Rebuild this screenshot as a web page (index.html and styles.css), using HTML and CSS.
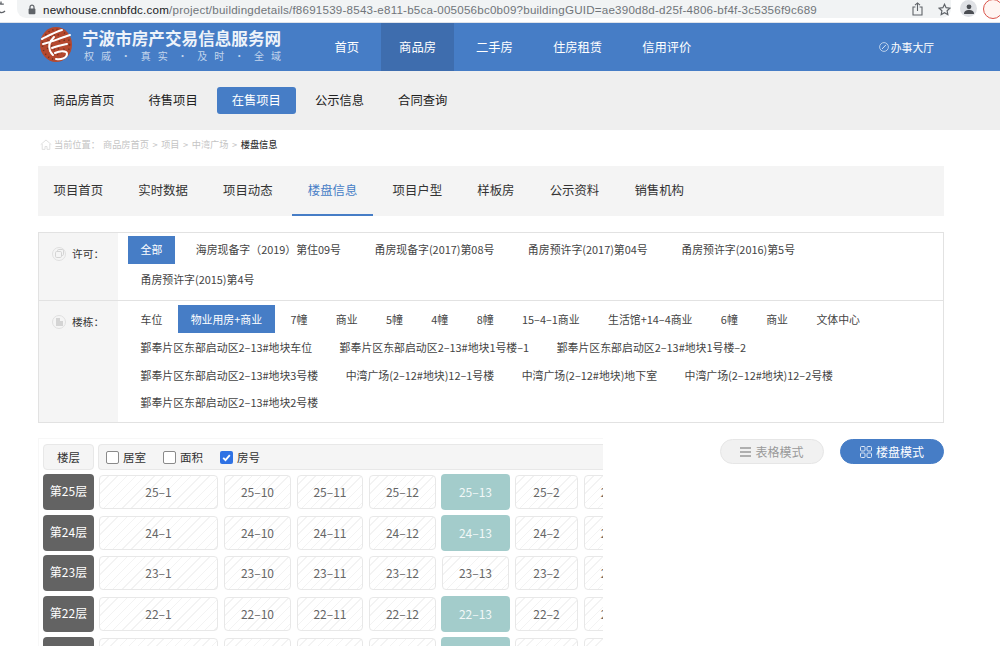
FILE: index.html
```html
<!DOCTYPE html>
<html lang="zh-CN">
<head>
<meta charset="utf-8">
<title>楼盘信息</title>
<link rel="stylesheet" href="styles.css">
</head>
<body>
<div class="chrome">
  <svg class="reload" width="6" height="14" viewBox="0 0 6 14"><path d="M1.5 2.6A4.6 4.6 0 0 0 -3 7a4.6 4.6 0 0 0 8 3M1 .5v2.6h2.8" fill="none" stroke="#5f6368" stroke-width="1.3"/></svg>
  <div class="urlbar">
    <svg class="lock" width="8" height="11" viewBox="0 0 8 11"><path d="M2 5V3.2a2 2 0 0 1 4 0V5" fill="none" stroke="#5f6368" stroke-width="1.2"/><rect x="0.6" y="4.6" width="6.8" height="5.6" rx="1" fill="#5f6368"/></svg>
    <span class="url"><b class="host">newhouse.cnnbfdc.com</b>/project/buildingdetails/f8691539-8543-e811-b5ca-005056bc0b09?buildingGUID=ae390d8d-d25f-4806-bf4f-3c5356f9c689</span>
    <svg class="url-icon share" width="11" height="14" viewBox="0 0 11 14"><path d="M3.4 5H1v8h9V5H7.6M5.5 9V1M3 3.2 5.5.9 8 3.2" fill="none" stroke="#5f6368" stroke-width="1.1"/></svg>
    <svg class="url-icon star" width="13" height="13" viewBox="0 0 13 13"><path d="m6.5 1.3 1.6 3.4 3.7.5-2.7 2.6.7 3.7-3.3-1.8-3.3 1.8.7-3.7L1.2 5.2l3.7-.5z" fill="none" stroke="#5f6368" stroke-width="1.2"/></svg>
  </div>
  <div class="avatar"><svg width="10" height="10" viewBox="0 0 10 10"><circle cx="5" cy="2.8" r="2.4" fill="#4a4d52"/><path d="M0 10c0-3 2-4 5-4s5 1 5 4z" fill="#4a4d52"/></svg></div>
  <div class="profile"></div>
</div>

<header class="topbar">
  <div class="brand">
    <svg class="logo" width="32" height="35" viewBox="0 0 32 35">
      <ellipse cx="16" cy="17.500" rx="16" ry="17.500" fill="#b5482e"/>
      <g fill="none" stroke="#5b2a1f" stroke-width="1.600" stroke-dasharray="1.200 3" opacity=".75">
        <ellipse cx="16" cy="17.500" rx="13.500" ry="15"/>
        <ellipse cx="16" cy="17.500" rx="9" ry="10"/>
        <ellipse cx="16" cy="17.500" rx="4.500" ry="5"/>
      </g>
      <path d="M2 12C8 9 15 5 22 3M3 17C12 15 20 11 30 8M14 10C10 14 8 19 10 24c1 2 2 3 3 4M12 21c5-2 10-3 15-4M15 26c4-2 12-3 12 1 0 4-6 6-11 5" fill="none" stroke="#fff" stroke-width="2" stroke-linecap="round"/>
    </svg>
    <div class="brand-text">
      <div class="brand-title">宁波市房产交易信息服务网</div>
      <div class="brand-sub"><span class="pair"><i>权</i><i>威</i></span><span>·</span><span class="pair"><i>真</i><i>实</i></span><span>·</span><span class="pair"><i>及</i><i>时</i></span><span>·</span><span class="pair"><i>全</i><i>域</i></span></div>
    </div>
  </div>
  <nav class="mainnav">
    <a class="mainnav-item">首页</a>
    <a class="mainnav-item is-active">商品房</a>
    <a class="mainnav-item">二手房</a>
    <a class="mainnav-item">住房租赁</a>
    <a class="mainnav-item">信用评价</a>
  </nav>
  <a class="hall">
    <svg width="10" height="10" viewBox="0 0 10 10"><circle cx="5" cy="5" r="4.4" fill="none" stroke="#d5e2f3" stroke-width=".8"/><path d="m3 7 4-4.2" stroke="#d5e2f3" stroke-width="1"/></svg>
    办事大厅
  </a>
</header>

<nav class="subnav">
  <a class="subnav-item">商品房首页</a>
  <a class="subnav-item">待售项目</a>
  <a class="subnav-item is-active">在售项目</a>
  <a class="subnav-item">公示信息</a>
  <a class="subnav-item">合同查询</a>
</nav>

<main class="content">
  <div class="crumbs">
    <svg width="12" height="11" viewBox="0 0 12 11"><path d="M.7 5.6 6 1l5.300 4.600M2.200 5v5.400h2.800V7.500h2v2.900h2.800V5" fill="none" stroke="#dcdcdc" stroke-width=".9"/></svg>
    <span class="crumb-label">当前位置：</span>
    <span class="crumb-trail">商品房首页 &gt; 项目 &gt; 中湾广场 &gt; <strong>楼盘信息</strong></span>
  </div>

  <nav class="tabs">
    <a class="tab">项目首页</a>
    <a class="tab">实时数据</a>
    <a class="tab">项目动态</a>
    <a class="tab is-active">楼盘信息</a>
    <a class="tab">项目户型</a>
    <a class="tab">样板房</a>
    <a class="tab">公示资料</a>
    <a class="tab">销售机构</a>
  </nav>

  <section class="filters">
    <div class="filter filter-license">
      <div class="filter-label">
        <span class="filter-icon"><svg width="9" height="9" viewBox="0 0 9 9"><rect x="2.500" y=".5" width="6" height="6" rx="1.200" fill="none" stroke="#d4d4d4"/><rect x=".5" y="2.500" width="6" height="6" rx="1.200" fill="#f5f5f5" stroke="#d4d4d4"/></svg></span>
        许可：
      </div>
      <div class="filter-options">
        <a class="opt is-active">全部</a>
        <a class="opt">海房现备字（2019）第住09号</a>
        <a class="opt">甬房现备字(2017)第08号</a>
        <a class="opt">甬房预许字(2017)第04号</a>
        <a class="opt">甬房预许字(2016)第5号</a>
        <a class="opt">甬房预许字(2015)第4号</a>
      </div>
    </div>
    <div class="filter filter-building">
      <div class="filter-label">
        <span class="filter-icon"><svg width="9" height="9" viewBox="0 0 9 9"><path d="M1 9V1h4v8zM5 9V4h3v5z" fill="#d4d4d4"/></svg></span>
        楼栋：
      </div>
      <div class="filter-options">
        <a class="opt">车位</a>
        <a class="opt is-active">物业用房+商业</a>
        <a class="opt">7幢</a>
        <a class="opt">商业</a>
        <a class="opt">5幢</a>
        <a class="opt">4幢</a>
        <a class="opt">8幢</a>
        <a class="opt">15–4–1商业</a>
        <a class="opt">生活馆+14–4商业</a>
        <a class="opt">6幢</a>
        <a class="opt">商业</a>
        <a class="opt">文体中心</a>
        <a class="opt">鄞奉片区东部启动区2–13#地块车位</a>
        <a class="opt">鄞奉片区东部启动区2–13#地块1号楼–1</a>
        <a class="opt">鄞奉片区东部启动区2–13#地块1号楼–2</a>
        <a class="opt">鄞奉片区东部启动区2–13#地块3号楼</a>
        <a class="opt">中湾广场(2–12#地块)12–1号楼</a>
        <a class="opt">中湾广场(2–12#地块)地下室</a>
        <a class="opt">中湾广场(2–12#地块)12–2号楼</a>
        <a class="opt">鄞奉片区东部启动区2–13#地块2号楼</a>
      </div>
    </div>
  </section>

  <section class="board">
    <div class="plan">
      <div class="plan-head">
        <div class="plan-floor-title">楼层</div>
        <div class="plan-options">
          <label class="check"><span class="box"></span>居室</label>
          <label class="check"><span class="box"></span>面积</label>
          <label class="check"><span class="box is-checked"><svg width="13" height="13" viewBox="0 0 13 13"><path d="m3.200 6.800 2.300 2.400 4.300-5" fill="none" stroke="#fff" stroke-width="1.800"/></svg></span>房号</label>
        </div>
      </div>
      <div class="floor">
        <div class="floor-name">第25层</div>
        <div class="cell">25–1</div><div class="cell">25–10</div><div class="cell">25–11</div><div class="cell">25–12</div><div class="cell is-sold">25–13</div><div class="cell">25–2</div><div class="cell">25–3</div>
      </div>
      <div class="floor">
        <div class="floor-name">第24层</div>
        <div class="cell">24–1</div><div class="cell">24–10</div><div class="cell">24–11</div><div class="cell">24–12</div><div class="cell is-sold">24–13</div><div class="cell">24–2</div><div class="cell">24–3</div>
      </div>
      <div class="floor">
        <div class="floor-name">第23层</div>
        <div class="cell">23–1</div><div class="cell">23–10</div><div class="cell">23–11</div><div class="cell">23–12</div><div class="cell">23–13</div><div class="cell">23–2</div><div class="cell">23–3</div>
      </div>
      <div class="floor">
        <div class="floor-name">第22层</div>
        <div class="cell">22–1</div><div class="cell">22–10</div><div class="cell">22–11</div><div class="cell">22–12</div><div class="cell is-sold">22–13</div><div class="cell">22–2</div><div class="cell">22–3</div>
      </div>
      <div class="floor">
        <div class="floor-name">第21层</div>
        <div class="cell">21–1</div><div class="cell">21–10</div><div class="cell">21–11</div><div class="cell">21–12</div><div class="cell is-sold">21–13</div><div class="cell">21–2</div><div class="cell">21–3</div>
      </div>
    </div>
    <div class="modes">
      <a class="mode">
        <svg width="11" height="10" viewBox="0 0 11 10"><path d="M0 1h11M0 5h11M0 9h11" stroke="#999" stroke-width="1.300"/></svg>
        表格模式
      </a>
      <a class="mode is-active">
        <svg width="12" height="12" viewBox="0 0 12 12"><g fill="none" stroke="#dbe6f5" stroke-width="1"><rect x=".5" y=".5" width="4.500" height="4.500" rx="1"/><rect x="7" y=".5" width="4.500" height="4.500" rx="1"/><rect x=".5" y="7" width="4.500" height="4.500" rx="1"/><rect x="7" y="7" width="4.500" height="4.500" rx="1"/></g></svg>
        楼盘模式
      </a>
    </div>
  </section>
</main>
</body>
</html>
```
FILE: styles.css
```css
* { box-sizing: border-box; }
html, body { margin: 0; height: 646px; overflow: hidden; background: #fff; }
body { font-family: "Noto Sans CJK SC", "Liberation Sans", sans-serif; color: #333; }
a { color: inherit; text-decoration: none; }

.chrome { height: 23px; display: flex; align-items: flex-start; border-bottom: 1px solid #dfe3ea; background: #fff; }
.reload { flex: none; margin: 1px 11px 0 0; }
.urlbar { width: 941px; height: 18px; background: #f1f3f4; border-radius: 0 0 9px 9px; display: flex; align-items: center; padding: 0 0 0 11px; }
.lock { flex: none; margin-right: 7px; }
.url { font: 11.6px "Liberation Sans", sans-serif; color: #70757a; white-space: nowrap; width: 806px; flex: none; overflow: hidden; letter-spacing: .215px; }
.host { font-weight: 400; color: #202124; }
.url-icon { flex: none; }
.share { margin: 0 0 0 63px; }
.star { margin-left: 15px; }
.avatar { flex: none; width: 17px; height: 17px; border-radius: 50%; background: #dfe1e5; margin: 0 0 0 9px; display: flex; align-items: center; justify-content: center; }
.profile { flex: none; width: 20px; height: 20px; border-radius: 50%; border: 1px solid #d9534a; background: #fff5f2; margin: -1px 0 0 6px; }

.topbar { height: 48px; background: #467dc6; display: flex; color: #fff; padding-left: 40px; }
.brand { width: 276.500px; flex: none; display: flex; align-items: center; }
.logo { flex: none; margin: -5px 10px 0 0; }
.brand-text { margin-top: -5px; }
.brand-title { font-size: 16.600px; line-height: 20px; font-weight: 700; color: #eef3fa; white-space: nowrap; }
.brand-sub { display: flex; justify-content: space-between; width: 197px; margin: 1px 0 0 2px; font-size: 10px; line-height: 13px; color: #c3d5ec; white-space: nowrap; }
.pair { display: flex; gap: 7px; }
.pair i { font-style: normal; }
.mainnav { display: flex; gap: 4px; }
.mainnav-item { padding: 0 18px; font-size: 12.300px; line-height: 48px; }
.mainnav-item.is-active { background: #3e6dae; }
.hall { margin-left: auto; margin-right: 66px; display: flex; align-items: center; gap: 2px; font-size: 10.800px; }

.subnav { height: 59px; background: #efefef; padding-left: 38px; display: flex; align-items: center; gap: 4px; }
.subnav-item { padding: 0 15px; height: 27px; line-height: 26px; font-size: 12.300px; color: #222; border-radius: 3px; }
.subnav-item.is-active { background: #467dc6; color: #fff; }

.content { width: 906px; margin-left: 38px; }
.crumbs { height: 36px; padding: 0 0 8px 2px; display: flex; align-items: center; font-size: 9.200px; color: #c4c4c4; }
.crumbs svg { flex: none; margin-right: 2px; }
.crumb-label { width: 49px; }
.crumb-trail { word-spacing: 1.500px; }
.crumb-trail strong { font-weight: 500; color: #333; }

.tabs { height: 50px; background: #f4f4f4; display: flex; gap: 4px; }
.tab { padding: 0 15.600px; line-height: 48px; font-size: 12.400px; color: #333; height: 50px; }
.tab.is-active { color: #467dc6; border-bottom: 2px solid #467dc6; }

.filters { margin-top: 16px; border: 1px solid #e2e2e2; }
.filter { display: flex; }
.filter + .filter { border-top: 1px solid #e2e2e2; }
.filter-label { width: 79px; flex: none; background: #f5f5f5; display: flex; align-items: flex-start; font-size: 10.700px; color: #333; padding: 12.500px 0 0 13px; line-height: 16px; }
.filter-icon { width: 14px; height: 14px; border-radius: 50%; border: 1px solid #e0e0e0; margin: 1px 6px 0 0; display: flex; align-items: center; justify-content: center; }
.filter-options { flex: 1; display: flex; flex-wrap: wrap; align-content: flex-start; font-size: 10.900px; padding-left: 10px; }
.filter-license { height: 67px; }
.filter-license .filter-options { padding-top: 3px; column-gap: 8.500px; row-gap: 2px; }
.filter-building { height: 122px; }
.filter-building .filter-options { padding-top: 4px; column-gap: 2.500px; }
.opt { padding: 0 12.500px; height: 28px; line-height: 27px; color: #444; white-space: nowrap; }
.filter-building .opt { height: 27.700px; line-height: 29px; }
.filter-building .opt:nth-child(-n+12) { margin-right: .9px; }
.filter-building .opt.is-active { height: 28px; }
.opt.is-active { background: #467dc6; color: #fff; }

.board { display: flex; justify-content: space-between; margin-top: 15px; }
.plan { width: 565px; height: 300px; overflow: hidden; border-top: 1px solid #f7f7f7; border-left: 1px solid #f7f7f7; padding: 5px 0 0 4px; flex: none; }
.plan-head { display: flex; gap: 4px; height: 26px; margin-bottom: 4px; }
.plan-floor-title { width: 51px; flex: none; background: #f5f5f5; border: 1px solid #e8e8e8; border-radius: 4px; text-align: center; font-size: 11.500px; line-height: 24px; color: #333; }
.plan-options { flex: 1; background: #f5f5f5; border: 1px solid #e8e8e8; border-right: 0; border-radius: 4px 0 0 4px; display: flex; align-items: center; padding-left: 7px; gap: 17px; font-size: 11.500px; color: #333; }
.check { display: flex; align-items: center; gap: 4px; }
.box { width: 13px; height: 13px; border: 1px solid #8a8a8a; border-radius: 2px; background: #fff; display: block; }
.box.is-checked { border: 0; background: #2f72e4; }
.floor { display: grid; grid-template-columns: 51px 121px 69px 68px 69px 69px 65px 62px; column-gap: 4px; height: 36px; margin-bottom: 4.700px; width: 640px; }
.floor-name { background: #636363; color: #fff; border-radius: 4px; text-align: center; font-size: 12px; line-height: 34px; }
.cell { margin: 1px; border: 1px solid #e8e8e8; border-radius: 4px; text-align: center; font-size: 12px; line-height: 32px; color: #666; background: repeating-linear-gradient(135deg, #fff 0, #fff 5.500px, #f3f3f3 5.500px, #f3f3f3 6.500px); }
.cell.is-sold { margin: 0; border: 0; background: #a3cccb; color: #f2f8f8; line-height: 35px; }

.modes { display: flex; gap: 16px; margin-top: 1px; }
.mode { width: 104px; height: 25px; border-radius: 13px; display: flex; align-items: center; justify-content: center; gap: 4px; font-size: 12px; background: #f1f1f1; border: 1px solid #e6e6e6; color: #999; }
.mode.is-active { background: #467dc6; border-color: #467dc6; color: #fff; }
```
